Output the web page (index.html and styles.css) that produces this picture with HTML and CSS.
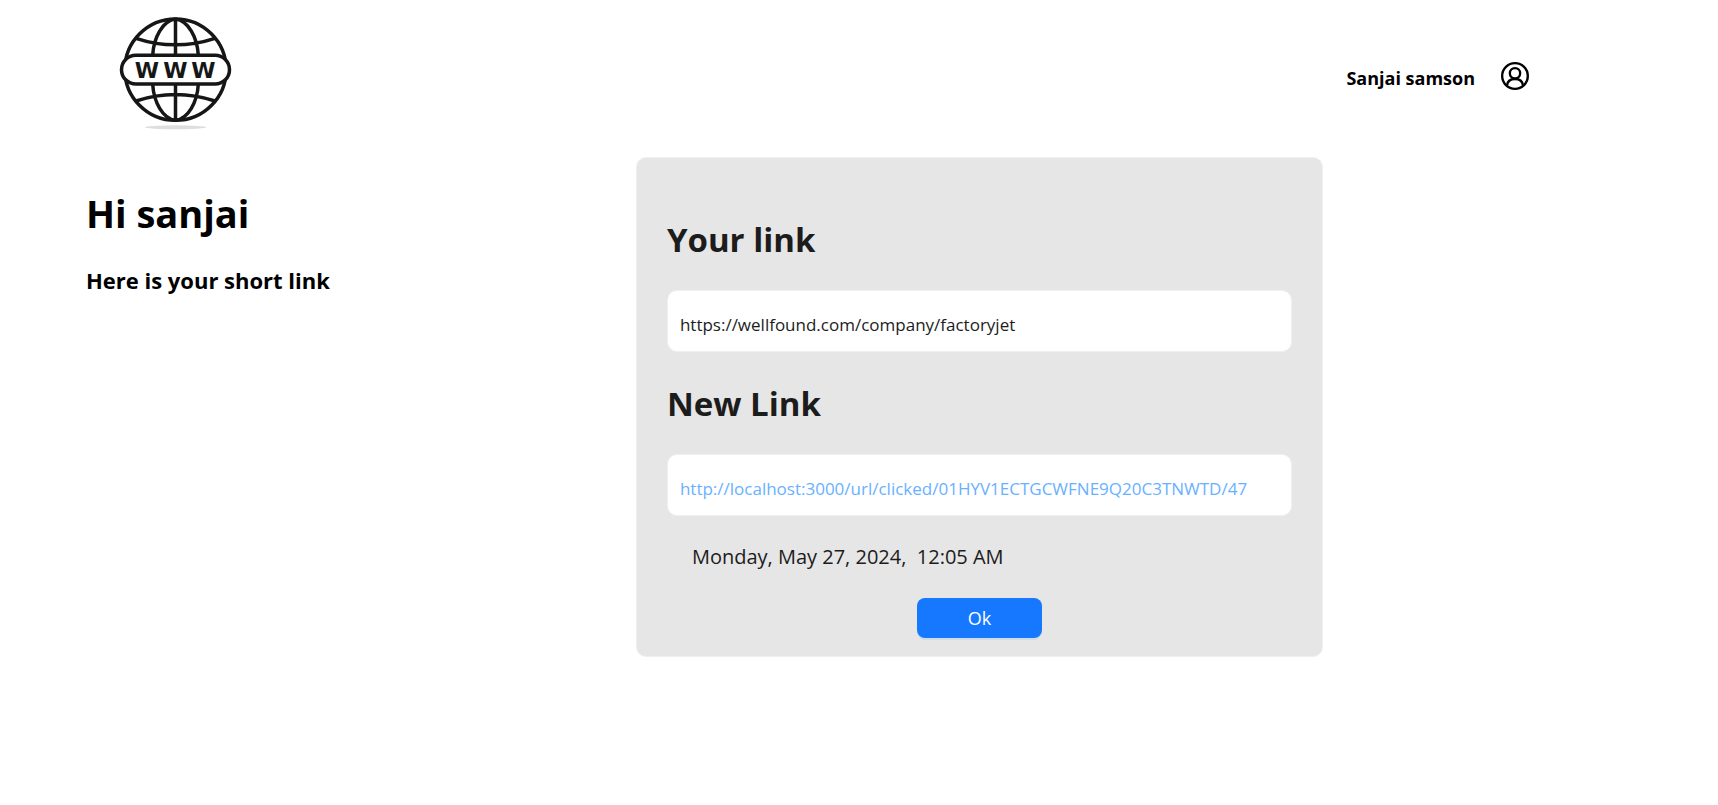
FILE: index.html
```html
<!DOCTYPE html>
<html lang="en">
<head>
<meta charset="utf-8">
<meta name="viewport" content="width=device-width, initial-scale=1">
<title>Short link</title>
<link rel="stylesheet" href="styles.css">
</head>
<body>
<header class="header">
  <svg class="logo" viewBox="54 39 345 357" role="img" aria-label="WWW">
    <ellipse cx="227" cy="382" rx="92" ry="6" fill="#dedede"/>
    <g fill="none" stroke="#161616" stroke-width="10.500">
      <circle cx="226.500" cy="209" r="152"/>
      <path d="M226.500 57V361M226.500 57C188 62 161 112 158 166M226.500 57C265 62 292 112 295 166M158 252C161 306 188 356 226.500 361M295 252C292 306 265 356 226.500 361M108 115Q226 154 345 115M108 303Q226 264 345 303"/>
      <rect x="64.500" y="166" width="324" height="86" rx="43" fill="#fff"/>
    </g>
    <text class="logo-text" x="141 226 310" y="235">WWW</text>
  </svg>
  <div class="user">
    <span class="user-name">Sanjai samson</span>
    <button class="user-button" type="button" aria-label="Account">
      <svg class="user-icon" viewBox="0 0 84 84" fill="none" stroke="#000" stroke-width="7">
        <circle cx="42" cy="42" r="38.500"/>
        <circle cx="42" cy="34" r="15.500"/>
        <path d="M18 71C19 57 28 51 42 51S65 57 66 71"/>
      </svg>
    </button>
  </div>
</header>
<main class="main">
  <section class="intro">
    <h1 class="greeting">Hi sanjai</h1>
    <p class="subtitle">Here is your short link</p>
  </section>
  <section class="card">
    <div class="field">
      <h2 class="field-title">Your link</h2>
      <div class="field-box">https://wellfound.com/company/factoryjet</div>
    </div>
    <div class="field">
      <h2 class="field-title">New Link</h2>
      <div class="field-box"><a class="short-link" href="http://localhost:3000/url/clicked/01HYV1ECTGCWFNE9Q20C3TNWTD/47">http://localhost:3000/url/clicked/01HYV1ECTGCWFNE9Q20C3TNWTD/47</a></div>
    </div>
    <p class="date">Monday, May 27, 2024,&nbsp; 12:05 AM</p>
    <button class="ok" type="button">Ok</button>
  </section>
</main>
</body>
</html>
```
FILE: styles.css
```css
* { box-sizing: border-box; }
body {
  margin: 0;
  background: #fff;
  color: #000;
  font-family: "Open Sans", "Noto Sans", sans-serif;
}
h1, h2, p { margin: 0; }
.header {
  display: flex;
  justify-content: space-between;
  align-items: flex-start;
  padding: 13px 11% 25px 118px;
}
.logo { width: 115px; height: 119px; }
.logo-text {
  font-family: "DejaVu Sans", sans-serif;
  font-weight: 700;
  font-size: 66px;
  text-anchor: middle;
  fill: #161616;
}
.user {
  display: flex;
  align-items: flex-start;
  gap: 26px;
  padding-top: 49px;
}
.user-name { padding-top: 2px; font-size: 18px; line-height: 28px; font-weight: 700; }
.user-button {
  padding: 0;
  border: 0;
  background: none;
  cursor: pointer;
}
.user-icon { display: block; width: 28px; height: 28px; }
.main {
  display: flex;
  align-items: flex-start;
  padding-left: 5%;
}
.intro {
  flex: 0 0 550px;
  padding-top: 32px;
}
.greeting { font-size: 38px; line-height: 48px; font-weight: 700; }
.subtitle { margin-top: 27px; font-size: 22px; line-height: 32px; font-weight: 700; }
.card {
  display: flex;
  flex-direction: column;
  gap: 27px;
  flex: 0 0 687px;
  padding: 60px 30px 18px;
  border: 1px solid #f0f0f0;
  border-radius: 10px;
  background: #e6e6e6;
  color: #1c1c1c;
}
.field { display: flex; flex-direction: column; gap: 28px; }
.field + .field { padding-top: 3px; }
.field-title { font-size: 33px; line-height: 44px; font-weight: 700; }
.field-box {
  padding: 22px 12px 14px;
  border: 1px solid #f0f0f0;
  border-radius: 10px;
  background: #fff;
  font-size: 17px;
  line-height: 24px;
  font-weight: 400;
}
.short-link { color: #69b1ff; text-decoration: none; }
.date { padding-left: 25px; font-size: 20px; line-height: 28px; font-weight: 500; }
.ok {
  align-self: center;
  width: 125px;
  height: 40px;
  border: 0;
  border-radius: 8px;
  background: #1677ff;
  box-shadow: 0 2px 0 rgba(5, 145, 255, 0.1);
  color: #fff;
  font-family: inherit;
  font-size: 18px;
  font-weight: 400;
  cursor: pointer;
}
```
